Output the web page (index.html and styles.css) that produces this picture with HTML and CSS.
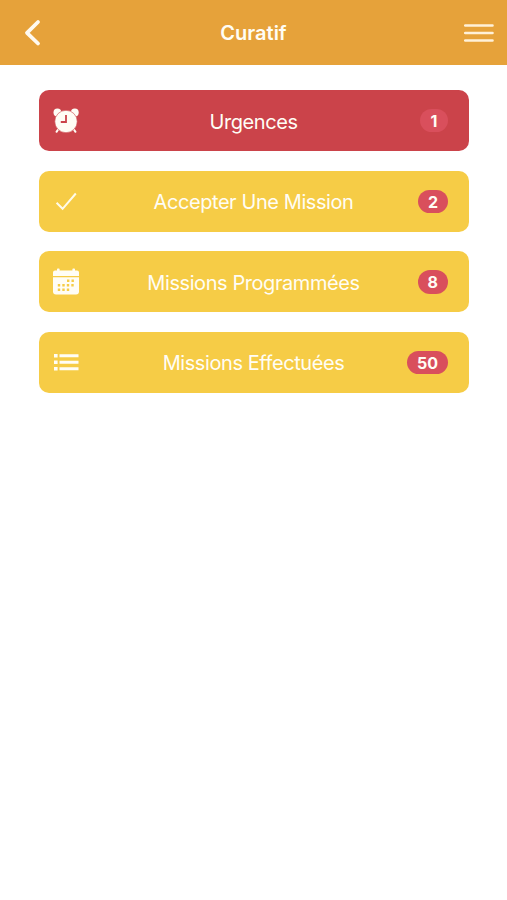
FILE: index.html
```
<!DOCTYPE html>
<html lang="fr">

<head>
    <meta charset="UTF-8" />
    <meta name="viewport" content="width=device-width, initial-scale=1.0" />
    <title>Curatif</title>
    <link rel="stylesheet" href="styles.css">
</head>

<body>
    <header class="header">
        <a class="back" href="#" aria-label="Retour">
            <svg width="17" height="28" viewBox="0 0 17 28"><path d="M14 3 3 13.800 14 24.500" /></svg>
        </a>
        <h1 class="title">Curatif</h1>
        <a class="menu" href="#" aria-label="Menu">
            <svg width="30" height="20" viewBox="0 0 30 20"><path d="M1.200 2.500h27.300M1.200 10h27.300M1.200 17.500h27.300" /></svg>
        </a>
    </header>

    <main class="list">
        <a class="item urgent" href="#">
            <svg class="icon" viewBox="0 0 28 28">
                <circle cx="5.400" cy="5.400" r="3.900" />
                <circle cx="22.800" cy="5.400" r="3.900" />
                <path class="line" d="m6.500 22-2 2.800M21.500 22l2 2.800" />
                <circle class="face" cx="14" cy="14.500" r="11.200" />
                <path class="hand" d="M14 8v7H8.800" />
            </svg>
            <span class="label">Urgences</span>
            <span class="badge">1</span>
        </a>
        <a class="item" href="#">
            <svg class="icon" viewBox="0 0 28 28">
                <path class="check" d="m4.600 15.800 6 6L23.800 6.500" />
            </svg>
            <span class="label">Accepter Une Mission</span>
            <span class="badge">2</span>
        </a>
        <a class="item" href="#">
            <svg class="icon" viewBox="0 0 28 28">
                <path d="M1 8V4.500Q1 2.500 3 2.500h2V1.200q0-.7.800-.7h1q.8 0 .8.700v1.300h12.800V1.200q0-.7.800-.7h1q.8 0 .8.700v1.300H25q2 0 2 2V8z" />
                <path d="M1 9.200h26v14.300q0 3-3 3H4q-3 0-3-3z" />
                <g class="days">
                    <path d="M15 12.800h7" />
                    <path d="M5.800 17.200h16.500" />
                    <path d="M5.800 21.700h12" />
                </g>
            </svg>
            <span class="label">Missions Programmées</span>
            <span class="badge">8</span>
        </a>
        <a class="item" href="#">
            <svg class="icon" viewBox="0 0 28 28">
                <path d="M2 6h3.600v3.600H2zM2 12.500h3.600v3.600H2zM2 19h3.600v3.600H2z" />
                <path d="M7.500 6.300h19v3h-19zM7.500 12.800h19v3h-19zM7.500 19.300h19v3h-19z" />
            </svg>
            <span class="label">Missions Effectuées</span>
            <span class="badge">50</span>
        </a>
    </main>
</body>

</html>
```
FILE: styles.css
```
:root {
    --orange: #e6a23a;
    --yellow: #f6cc46;
    --red: #cb434a;
    --badge: #d94f5c;
}

* {
    box-sizing: border-box;
}

body {
    margin: 0;
    min-height: 100vh;
    font-family: Inter, "Liberation Sans", sans-serif;
    background-color: #fff;
    color: #fffdf5;
}

a {
    color: inherit;
    text-decoration: none;
}

svg {
    display: block;
}

.header {
    display: grid;
    grid-template-columns: 60px 1fr 60px;
    align-items: center;
    height: 65px;
    padding: 0 13.5px 0 13.5px;
    background-color: var(--orange);
}

.back {
    padding-left: 10.5px;
}

.back path,
.menu path {
    fill: none;
    stroke: #fffaf0;
    stroke-linecap: round;
    stroke-linejoin: round;
}

.back path {
    stroke-width: 3.8;
}

.menu {
    justify-self: end;
}

.menu path {
    stroke: #fff1d8;
    stroke-width: 2.6;
}

.title {
    margin: 0;
    padding-top: 1px;
    font-size: 20px;
    font-weight: 600;
    line-height: 28px;
    letter-spacing: 0;
    text-align: center;
}

.list {
    display: flex;
    flex-direction: column;
    gap: 19.6px;
    padding: 25.2px 38.5px 0 39px;
}

.item {
    display: grid;
    grid-template-columns: 60px 1fr 53px;
    align-items: center;
    height: 61px;
    padding: 0 20.5px 0 13px;
    border-radius: 10px;
    background-color: var(--yellow);
}

.item.urgent {
    background-color: var(--red);
}

.icon {
    width: 28px;
    height: 28px;
    fill: #fffdf5;
}

.icon .line {
    stroke: #fffdf5;
    stroke-width: 2;
    stroke-linecap: round;
}

.icon .face {
    stroke: var(--red);
    stroke-width: 0.6;
}

.icon .hand {
    fill: none;
    stroke: var(--red);
    stroke-width: 1.8;
}

.icon .check {
    fill: none;
    stroke: #fffbea;
    stroke-width: 2;
}

.icon .days {
    stroke: var(--yellow);
    stroke-width: 2.4;
    stroke-dasharray: 2.4 2.1;
}

.label {
    padding-top: 2px;
    font-size: 20px;
    line-height: 28px;
    letter-spacing: -0.42px;
    text-align: center;
    white-space: nowrap;
}

.badge {
    justify-self: end;
    min-width: 30px;
    height: 23.5px;
    padding: 0 10px;
    border-radius: 12px;
    background-color: var(--badge);
    font-size: 16px;
    font-weight: 700;
    line-height: 24px;
    text-align: center;
}

.urgent .badge {
    min-width: 28px;
}
```
